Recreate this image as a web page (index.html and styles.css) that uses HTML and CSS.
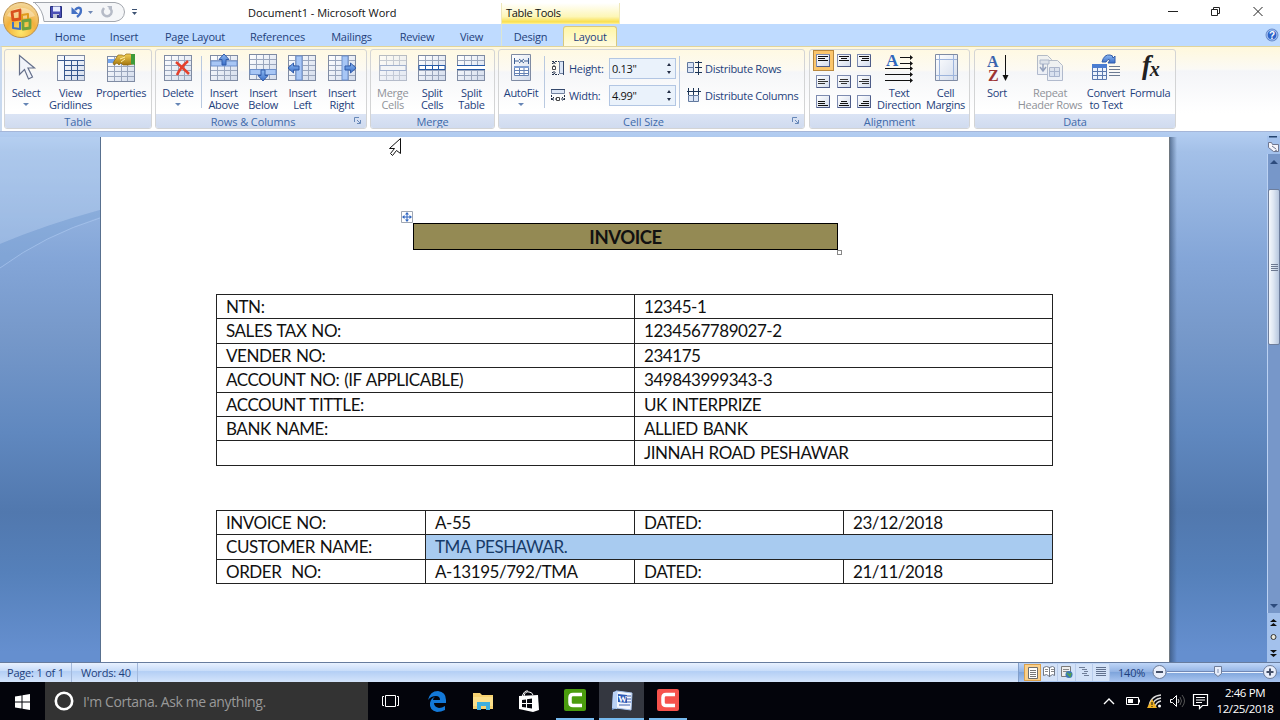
FILE: index.html
```html
<!DOCTYPE html>
<html>
<head>
    <meta charset="utf-8">
    <title>Document1 - Microsoft Word</title>
    <link rel="stylesheet" href="styles.css">
</head>
<body>
    <svg class="defs">
        <defs>
            <linearGradient id="cellfill" x1="0" y1="0" x2="1" y2="1"><stop offset="0" stop-color="#fff"/><stop offset="1" stop-color="#d3dcec"/></linearGradient>
            <linearGradient id="blue" x1="0" y1="0" x2="0" y2="1"><stop offset="0" stop-color="#8db9f2"/><stop offset="1" stop-color="#3b6fc8"/></linearGradient>
            <linearGradient id="hand" x1="0" y1="0" x2="0" y2="1"><stop offset="0" stop-color="#f3cf56"/><stop offset="1" stop-color="#a3750c"/></linearGradient>
            <radialGradient id="orb" cx=".5" cy=".85" r=".85"><stop offset="0" stop-color="#ffe66b"/><stop offset=".5" stop-color="#f2b13c"/><stop offset="1" stop-color="#f3d9a0"/></radialGradient>
            <symbol id="grid" viewBox="0 0 28 26">
                <rect x=".5" y=".5" width="27" height="25" fill="url(#cellfill)" stroke="#7f8ba3"/>
                <path d="M1 5.500h26M1 10.500h26M1 15.500h26M1 20.500h26M7.500 1v24M14.500 1v24M20.500 1v24" stroke="#9aa6bd" fill="none"/>
            </symbol>
            <symbol id="lines" viewBox="0 0 14 13">
                <rect x=".5" y=".5" width="13" height="12" fill="url(#cellfill)" stroke="#7d8bb0"/>
                <path d="M1 12.500h13M13.500 1v12" stroke="#4e5c88"/>
            </symbol>
            <symbol id="launch" viewBox="0 0 7 7"><path d="M.5 5V.5H5M3 3l3 3M6.500 3v3.500H3" fill="none" stroke="#6788b8"/></symbol>
        </defs>
    </svg>

    <div class="titlebar">
        <div class="quick">
            <svg width="140" height="24" viewBox="0 0 140 24">
                <path d="M33 2.500H115Q124 4 124.500 12Q124 20 115 21.500H44Q43 10 35 3" fill="#f5f6f8" stroke="#a3a7ae"/>
                <path d="M50.500 6.500h11v11h-11z" fill="#4a4fb5" stroke="#27307d"/><path d="M53 6.500h7v5h-7z" fill="#e8edff"/><path d="M53 14h6v4h-6z" fill="#c4c9d8"/><path d="M57 15h2v3h-2z" fill="#333a77"/>
                <path d="M71.500 7v7h7z" fill="#4470c4"/><path d="M75 10q3-3.500 5.500-1.500q2 4-3.500 8.500" fill="none" stroke="#4470c4" stroke-width="2.400"/>
                <path d="M88 11h5l-2.500 3z" fill="#7088b5"/>
                <path d="M104 8q-3 4 0 7q4 3 7-1q2-4-2-6" fill="none" stroke="#b6bbc7" stroke-width="2.500"/><path d="M107 6h5v5z" fill="#b6bbc7"/>
                <path d="M132 9.500h5" stroke="#3d5273"/><path d="M132 12h5l-2.500 3z" fill="#3d5273"/>
            </svg>
        </div>
        <div class="doc-title">Document1 - Microsoft Word</div>
        <div class="tools-title">Table Tools</div>
        <div class="window-buttons">
            <svg width="110" height="24" viewBox="0 0 110 24" fill="none" stroke="#222">
                <path d="M8 11.500h10"/>
                <path d="M51.500 9.500h6v6h-6zM53.500 9V7.500h6v6H58"/>
                <path d="M93.500 7l9 9M102.500 7l-9 9"/>
            </svg>
        </div>
    </div>

    <div class="tabs">
        <span class="tab home">Home</span>
        <span class="tab insert">Insert</span>
        <span class="tab page-layout">Page Layout</span>
        <span class="tab references">References</span>
        <span class="tab mailings">Mailings</span>
        <span class="tab review">Review</span>
        <span class="tab view">View</span>
        <span class="tab design">Design</span>
        <span class="tab active">Layout</span>
        <svg class="help" width="14" height="14" viewBox="0 0 14 14"><circle cx="7" cy="7" r="6" fill="#2c62c9" stroke="#6e8fc9"/><circle cx="7" cy="7" r="5" fill="none" stroke="#bcd4fa"/><text x="7" y="10.500" text-anchor="middle" class="q">?</text></svg>
    </div>
    <svg class="office-button" width="38" height="38" viewBox="0 0 38 38">
        <circle cx="19" cy="19" r="17.500" fill="url(#orb)" stroke="#b98f4d"/>
        <path d="M5 15a15 13 0 0 1 28 0q-14 5-28 0" fill="#fff" opacity=".35"/>
        <g fill="none" stroke-width="2.800" stroke-linejoin="round">
            <path d="M10 11l8-2v9l-7 1z" stroke="#d9501e"/>
            <path d="M20 14l6-1v6l-6 1z" stroke="#e09a1c" stroke-width="2"/>
            <path d="M11 21v6l7 1v-7" stroke="#4272c4" stroke-width="2"/>
            <path d="M21 20l7-1v8l-7 1z" stroke="#6fa23e"/>
        </g>
    </svg>

    <div class="ribbon">
        <div class="group g-table">
            <div class="group-body">
                <div class="btn w40"><svg viewBox="0 0 28 28"><path d="M7.500 1.500v19l5-5 4 9.500 4-2-4.500-9h6.500z" fill="#f1f4fa" stroke="#66718c" stroke-width="1.200"/></svg><span>Select</span><i class="arrow"></i></div>
                <div class="btn w48"><svg viewBox="0 0 28 28"><use href="#grid" y="1" width="28" height="26"/><path d="M1 2h26v4H1zM1 6h6v20H1z" fill="#f4f7fc"/><path d="M7.500 2v24M1 6.500h26M7 11.500h20M7 16.500h20M7 21.500h20M14.500 6v20M20.500 6v20" stroke="#38588f"/></svg><span>View<br>Gridlines</span></div>
                <div class="btn w54"><svg viewBox="0 0 28 28"><use href="#grid" y="2" width="28" height="26"/><path d="M1 5h9v4H1z" fill="#73a5ed"/><path d="M6 9l5-8h4l2 1 2-2h4l3 1v9l-5 1h-5l-2-2-2 2-2-2-3 2z" fill="url(#hand)" stroke="#8b650f" stroke-width=".7"/><path d="M24 0h4v11l-4-1z" fill="#3f9b39"/><path d="M13 5l5-2M14 8l4-3" stroke="#fff0a4"/></svg><span>Properties</span></div>
            </div>
            <div class="group-label">Table</div>
        </div>

        <div class="group g-rows">
            <div class="group-body">
                <div class="btn w44"><svg viewBox="0 0 28 28"><use href="#grid" y="1" width="28" height="26"/><path d="M12 8q7 6 13 12M24 7q-8 7-11 14" stroke="#e5402c" stroke-width="2.500" fill="none"/></svg><span>Delete</span><i class="arrow"></i></div>
                <div class="sep"></div>
                <div class="btn w39"><svg viewBox="0 0 28 28"><use href="#grid" y="1" width="28" height="26"/><path d="M1 7h26v5H1z" fill="#a7c6f5" stroke="#6e91cc"/><path d="M14 0l5 5.500h-3V11h-4V5.500H9z" fill="url(#blue)" stroke="#315cab"/></svg><span>Insert<br>Above</span></div>
                <div class="btn w39"><svg viewBox="0 0 28 28"><use href="#grid" width="28" height="26"/><path d="M1 15.500h26v5H1z" fill="#a7c6f5" stroke="#6e91cc"/><path d="M14 27l5-5.500h-3V16h-4v5.500H9z" fill="url(#blue)" stroke="#315cab"/></svg><span>Insert<br>Below</span></div>
                <div class="btn w39"><svg viewBox="0 0 28 28"><use href="#grid" y="1" width="28" height="26"/><path d="M8 2h6v24H8z" fill="#a7c6f5" stroke="#6e91cc"/><path d="M0 14l5.500-5v3H11v4H5.500v3z" fill="url(#blue)" stroke="#315cab"/></svg><span>Insert<br>Left</span></div>
                <div class="btn w39"><svg viewBox="0 0 28 28"><use href="#grid" y="1" width="28" height="26"/><path d="M14 2h6v24h-6z" fill="#a7c6f5" stroke="#6e91cc"/><path d="M28 14l-5.500-5v3H17v4h5.500v3z" fill="url(#blue)" stroke="#315cab"/></svg><span>Insert<br>Right</span></div>
            </div>
            <div class="group-label">Rows &amp; Columns<svg class="launch"><use href="#launch"/></svg></div>
        </div>

        <div class="group g-merge">
            <div class="group-body">
                <div class="btn w39 disabled"><svg viewBox="0 0 28 28"><use href="#grid" y="1" width="28" height="26"/><path d="M1 11.500h26v5H1z" fill="#edf2fb" stroke="#5877b3"/></svg><span>Merge<br>Cells</span></div>
                <div class="btn w39"><svg viewBox="0 0 28 28"><use href="#grid" y="1" width="28" height="26"/><path d="M1 11.500h26v4H1zM7.500 11v5M14.500 11v5M20.500 11v5" fill="#fff" stroke="#2459a8"/></svg><span>Split<br>Cells</span></div>
                <div class="btn w39"><svg viewBox="0 0 28 28"><use href="#grid" y="1" width="28" height="26"/><path d="M0 11.500h28v4H0z" fill="#fff"/><path d="M0 11.500h28M0 15.500h28" stroke="#2459a8"/></svg><span>Split<br>Table</span></div>
            </div>
            <div class="group-label">Merge</div>
        </div>

        <div class="group g-size">
            <div class="group-body">
                <div class="btn w44"><svg viewBox="0 0 28 28"><path d="M4.500.500h19v26h-19z" fill="url(#cellfill)" stroke="#7f8ba3"/><path d="M7.500 4v6M21.500 4v6M8 7h4M17 7h4M12 5l5 4M17 5l-5 4" stroke="#3c5f94" fill="none"/><path d="M7.500 12.500h14v9h-14zM8 16.500h14M8 19.500h14M12.500 13v9M17 13v9" fill="#fff" stroke="#6582b4"/><path d="M7 12h15v2H7z" fill="#7e9ed3"/></svg><span>AutoFit</span><i class="arrow"></i></div>
                <div class="sep"></div>
                <div class="fields">
                    <div class="field"><svg width="14" height="14"><path d="M8.500.500h4v12h-4z" fill="#dce6f6" stroke="#71819f"/><path d="M12.500 0v14" stroke="#34486b"/><path d="M3 1v12M1 3l2-2 2 2M1 11l2 2 2-2M1 .500h7M1 13.500h7" stroke="#23314b" stroke-dasharray="2 1" fill="none"/><path d="M1.500 5.500h3v3h-3z" fill="#fff" stroke="#444"/></svg><label>Height:</label><div class="spin">0.13"<span><i class="up"></i><i class="down"></i></span></div></div>
                    <div class="field"><svg width="14" height="14"><path d="M.500 1.500h13v4H.500z" fill="#dce6f6" stroke="#71819f"/><path d="M0 1.500h14" stroke="#34486b"/><path d="M1 11h12M3 9l-2 2 2 2M11 9l2 2-2 2M.500 7v6M13.500 7v6" stroke="#23314b" stroke-dasharray="2 1" fill="none"/><path d="M5.500 9.500h3v3h-3z" fill="#fff" stroke="#444"/></svg><label>Width:</label><div class="spin">4.99"<span><i class="up"></i><i class="down"></i></span></div></div>
                </div>
                <div class="sep"></div>
                <div class="distribute">
                    <div class="field"><svg width="15" height="14"><path d="M.500 1.500h6v5h-6zM.500 6.500h6v5h-6z" fill="#dce6f6" stroke="#61789e"/><path d="M11.500 0v14M8 1.500h7M8 6.500h7M8 11.500h7" stroke="#1c3556"/></svg>Distribute Rows</div>
                    <div class="field"><svg width="15" height="14"><path d="M1.500 7.500h5v6h-5zM6.500 7.500h5v6h-5z" fill="#dce6f6" stroke="#61789e"/><path d="M0 3.500h14M1.500 0v7M6.500 0v7M11.500 0v7" stroke="#1c3556"/></svg>Distribute Columns</div>
                </div>
            </div>
            <div class="group-label">Cell Size<svg class="launch"><use href="#launch"/></svg></div>
        </div>

        <div class="group g-align">
            <div class="group-body">
                <div class="align-grid">
                    <b class="on"><svg><use href="#lines"/><path d="M2 2.500h10M2 4.500h7M2 6.500h10" stroke="#111"/></svg></b>
                    <b><svg><use href="#lines"/><path d="M2 2.500h10M4 4.500h6M2 6.500h10" stroke="#111"/></svg></b>
                    <b><svg><use href="#lines"/><path d="M2 2.500h10M5 4.500h7M4 6.500h8" stroke="#111"/></svg></b>
                    <b><svg><use href="#lines"/><path d="M2 4.500h7M2 6.500h10M2 8.500h7" stroke="#333"/></svg></b>
                    <b><svg><use href="#lines"/><path d="M3 4.500h8M2 6.500h10M4 8.500h6" stroke="#333"/></svg></b>
                    <b><svg><use href="#lines"/><path d="M5 4.500h7M2 6.500h10M5 8.500h7" stroke="#333"/></svg></b>
                    <b><svg><use href="#lines"/><path d="M2 6.500h7M2 8.500h7M2 10.500h10" stroke="#111"/></svg></b>
                    <b><svg><use href="#lines"/><path d="M4 6.500h6M3 8.500h8M2 10.500h10" stroke="#111"/></svg></b>
                    <b><svg><use href="#lines"/><path d="M6 6.500h6M4 8.500h8M2 10.500h10" stroke="#111"/></svg></b>
                </div>
                <div class="btn w46"><svg viewBox="0 0 28 28"><text x="1" y="12" class="letter-a">A</text><path d="M15 3.500h11M15 9.500h11M0 14.500h26M0 20.500h26M0 26.500h26" stroke="#111"/><path d="M25 1l3 2.500-3 2.500zM25 7l3 2.500-3 2.500zM25 12l3 2.500-3 2.500zM25 18l3 2.500-3 2.500zM25 24l3 2.500-3 2.500z" fill="#111"/></svg><span>Text<br>Direction</span></div>
                <div class="btn w48"><svg viewBox="0 0 28 28"><path d="M3.500.500h22v26h-22z" fill="url(#cellfill)" stroke="#7f8ba3"/><path d="M7.500 1v25M21.500 1v25M4 5.500h21M4 21.500h21" stroke="#9db4dc"/></svg><span>Cell<br>Margins</span></div>
            </div>
            <div class="group-label">Alignment</div>
        </div>

        <div class="group g-data">
            <div class="group-body">
                <div class="btn w38"><svg viewBox="0 0 28 28"><text x="4" y="13" class="letter-s">A</text><text x="5" y="27" class="letter-z">Z</text><path d="M22.500 1v24" stroke="#111"/><path d="M19.500 21h6l-3 6z" fill="#111"/></svg><span>Sort</span></div>
                <div class="btn w66 disabled"><svg viewBox="0 0 28 28"><path d="M1.500 1.500h10l4 4v15h-14z" fill="#e5ebf5" stroke="#7889aa"/><path d="M11.500 6.500h10l5 5v15h-15z" fill="#e5ebf5" stroke="#7889aa"/><path d="M4 6h9v4H4zM13.500 13.500h10v9h-10zM14 17.500h10M18.500 14v9" fill="#c3d0e8" stroke="#6b80ad"/><path d="M7 10v6M4 13l3 4 3-4" stroke="#405a92" stroke-width="1.500" fill="none"/></svg><span>Repeat<br>Header Rows</span></div>
                <div class="btn w46"><svg viewBox="0 0 28 28"><path d="M.500 10.500h14v15H.500zM1 17.500h14M1 21.500h14M5.500 14v11M10.500 14v11" fill="#edf3fc" stroke="#5a78ad"/><path d="M0 10h15v4H0z" fill="#4b7dd1"/><path d="M17 12.500h11M17 15.500h11M17 18.500h11M17 21.500h11" stroke="#6c7b93"/><path d="M10 8q2-8 8-7 3 0 3 3l2-2v7h-7l2-3q-2-2-4 2z" fill="url(#blue)" stroke="#315cab"/></svg><span>Convert<br>to Text</span></div>
                <div class="btn w42"><svg viewBox="0 0 28 28"><text x="6" y="20" class="fx">f<tspan dx="-1" dy="2" class="small-x">x</tspan></text></svg><span>Formula</span></div>
            </div>
            <div class="group-label">Data</div>
        </div>
    </div>

    <div class="workspace">
        <div class="margin-left"><svg width="100" height="526" viewBox="0 0 100 526"><path d="M0 0H100V73Q45 88 0 107z" fill="#c5dbf5" opacity=".3"/><path d="M0 107Q45 88 100 73V80Q45 98 0 131z" fill="#7ba2d3" opacity=".35"/><path d="M0 131Q45 98 100 81" stroke="#a9c6ee" fill="none" opacity=".7"/></svg></div>
        <div class="page">
            <div class="invoice-title">INVOICE
                <svg class="move" width="12" height="12"><path d="M.500.500h11v11H.500z" fill="#fff" stroke="#9fa7b3"/><path d="M6 2v8M2 6h8" stroke="#2e65c0"/><path d="M6 1l2 2.500H4zM6 11l2-2.500H4zM1 6l2.500-2v4zM11 6l-2.500-2v4z" fill="#2e65c0"/></svg>
                <i class="resize"></i>
            </div>
            <div class="sheet two">
                <div>NTN:</div><div>12345-1</div>
                <div>SALES TAX NO:</div><div>1234567789027-2</div>
                <div>VENDER NO:</div><div>234175</div>
                <div>ACCOUNT NO: (IF APPLICABLE)</div><div>349843999343-3</div>
                <div>ACCOUNT TITTLE:</div><div>UK INTERPRIZE</div>
                <div>BANK NAME:</div><div>ALLIED BANK</div>
                <div></div><div>JINNAH ROAD PESHAWAR</div>
            </div>
            <div class="sheet four">
                <div>INVOICE NO:</div><div>A-55</div><div>DATED:</div><div>23/12/2018</div>
                <div>CUSTOMER NAME:</div><div class="selected">TMA PESHAWAR.</div>
                <div>ORDER&nbsp; NO:</div><div>A-13195/792/TMA</div><div>DATED:</div><div>21/11/2018</div>
            </div>
        </div>
        <div class="margin-right"></div>
        <div class="scrollbar">
            <svg width="13" height="18"><path d="M2 .500h8" stroke="#24446f" stroke-width="2"/><path d="M1.500 6.500h3l1 2h6v7h-5l-5-4z" fill="#f4f4fa" stroke="#6f7790"/><path d="M5 10l4 3M8 15l2-1" stroke="#6f7790"/></svg>
            <div class="track">
                <svg width="12" height="35"><path d="M2 10h8L6 6z" fill="#2c4b7d"/></svg>
                <div class="thumb"><i></i><i></i><i></i><i></i></div>
                <svg class="track-end" width="12" height="12"><path d="M2 3h8L6 7z" fill="#2c4b7d"/></svg>
            </div>
            <svg width="13" height="49"><path d="M3 9h7L6.500 6zM3 13h7l-3.500-3zM3 13.500h7" fill="#111"/><circle cx="6.500" cy="24" r="2.500" fill="#e8e8dc" stroke="#333"/><path d="M3 37h7l-3.500 3zM3 41h7l-3.500 3z" fill="#111"/></svg>
        </div>
    </div>
    <svg class="pointer" width="14" height="22"><path d="M11.500 1.500L.500 11.500h5l-4 5 2 2 4-5 4 3z" fill="#fff" stroke="#111"/></svg>

    <div class="statusbar">
        <span class="pages">Page: 1 of 1</span>
        <span class="words">Words: 40</span>
        <div class="status-right">
            <div class="views">
                <b class="on"><svg width="17" height="16"><path d="M3.500 2.500h9v11h-9z" fill="#fff" stroke="#6d6d6d"/><path d="M5 5.500h6M5 7.500h6M5 9.500h6M5 11.500h6" stroke="#777"/></svg></b>
                <b><svg width="17" height="16"><path d="M2.500 3.500l3-1 3 1 3-1 2 1v8l-2-1-3 2-3-2-3 1zM8.500 3v10" fill="#fff" stroke="#707784"/><path d="M4 5.500h3M4 7.500h3M10 5.500h3M10 7.500h3" stroke="#888"/></svg></b>
                <b><svg width="17" height="16"><path d="M3.500 2.500h9v10h-9z" fill="#eee" stroke="#7a7a7a"/><path d="M5 5.500h6M5 7.500h6" stroke="#888"/><circle cx="11" cy="10.500" r="3.500" fill="#3c79b7"/><path d="M9 9l3 3 1-3" stroke="#55a44a" fill="none" stroke-width="1.500"/></svg></b>
                <b><svg width="17" height="16"><path d="M3 3.500h6M6 5.500h5M8 7.500h4M6 9.500h5M8 11.500h5" stroke="#6f7e98"/></svg></b>
                <b><svg width="17" height="16"><path d="M3 3.500h10M3 5.500h10M3 7.500h10M3 9.500h10M3 11.500h10" stroke="#60708d"/></svg></b>
            </div>
            <span class="zoom">140%</span>
            <svg class="slider" width="128" height="20"><path d="M16 8.500h96" stroke="#7087b5"/><path d="M16 9.500h96" stroke="#eaf2ff"/><g fill="#e8eefb" stroke="#6e7c98"><circle cx="8.500" cy="9" r="6.500"/><circle cx="119" cy="9" r="6.500"/><path d="M63.500 3.500h7v7l-3.500 3-3.500-3z"/></g><path d="M5 9h7M115.500 9h7M119 5.500v7" stroke="#445069" stroke-width="2"/><path d="M67 6v4" stroke="#8190b0"/></svg>
        </div>
    </div>

    <div class="taskbar">
        <div class="start"><svg width="16" height="16"><path d="M0 2.500l6.500-1v6H0zM7.500 1.300L15 0v7.500H7.500zM0 8.500h6.500v6l-6.500-1zM7.500 8.500H15V16l-7.500-1.300z" fill="#fff"/></svg></div>
        <div class="cortana"><svg width="20" height="20"><circle cx="10" cy="10" r="8.200" fill="none" stroke="#fff" stroke-width="2.600"/></svg><span>I'm Cortana. Ask me anything.</span></div>
        <div class="task"><svg width="20" height="14"><path d="M4.500 1.500h10v11h-10zM3 2.500H1.500v9H3M16 2.500h1.500v9H16" fill="none" stroke="#fff"/></svg></div>
        <div class="task edge"><svg width="20" height="21" viewBox="0 0 20 21"><path d="M1 9Q3 0 11 0Q19 1 19 9v3H7q0 4 5 5 3 0 6-2v4q-4 2-8 2-8-2-7-9 1-5 5-6-2 1-2 3h7q0-4-4-4-5 0-8 4z" fill="#1379d8"/></svg></div>
        <div class="task"><svg width="21" height="18"><path d="M0 1h7l2 2h11v14H0z" fill="#f6d271"/><path d="M0 5h20v9H0z" fill="#fbe08b"/><path d="M4 10h13v8h-4v-4H8v4H4z" fill="#3bafdf"/></svg></div>
        <div class="task"><svg width="20" height="22"><path d="M5 6q1-5 5-4 3 0 4 3M3 7q2-7 6-6" fill="none" stroke="#fff"/><path d="M0 6l19-1 1 15-6 2L0 19z" fill="#fff"/><path d="M3 10l4-.500V13H3zM8 9.300l5-.800V13H8zM3 14h4v3.500L3 17zM8 14h5v4.500l-5-.800z" fill="#05070d"/></svg></div>
        <div class="task running"><svg width="23" height="22"><rect width="22" height="22" rx="2" fill="#4a9c0e"/><path d="M18 5.500H9q-3 0-3 3v5q0 3 3 3h9" fill="none" stroke="#fff" stroke-width="3.500"/></svg></div>
        <div class="task running current"><svg width="22" height="21"><path d="M2 3l4-3v18l-5 2z" fill="#7aa4df"/><path d="M6 1l15 2-1 17-15-2z" fill="#f2f6fd" stroke="#a7c2eb"/><path d="M2 2l4-1v18l-5-1z" fill="#b9d1f5"/><path d="M14 6h6M16 9h4M15 12h5M8 15h11" stroke="#3b5fae"/><path d="M7 4l9 1v8l-9-1z" fill="#2d58b3"/><text x="7" y="12" class="w">W</text></svg></div>
        <div class="task running"><svg width="23" height="22"><rect width="22" height="22" rx="2" fill="#f6524c"/><path d="M18 5.500H9q-3 0-3 3v5q0 3 3 3h9" fill="none" stroke="#fff" stroke-width="3.500"/></svg></div>
        <div class="tray">
            <svg width="112" height="24" viewBox="0 0 112 24">
                <path d="M6 15l5-5 5 5" fill="none" stroke="#fff" stroke-width="1.400"/>
                <path d="M28.500 8.500h12v7h-12zM41.500 10.500v3" fill="none" stroke="#fff"/><path d="M30 10h5v4h-5z" fill="#fff"/>
                <path d="M51 18q1-11 12-12M54 18q1-8 9-9M57 18q1-5 6-6" fill="none" stroke="#ddd" stroke-width="1.300"/><circle cx="61.500" cy="17" r="1.500" fill="#fff"/><path d="M49 19l5-9 5 9z" fill="#f0b225"/><path d="M54 13v3M54 17v1" stroke="#111"/>
                <path d="M72.500 10.500h2l4-4v11l-4-4h-2z" fill="none" stroke="#fff"/><path d="M80 10q2 2 0 4" stroke="#ccc" fill="none"/><path d="M82 8q3 4 0 8M84 6q5 6 0 12" stroke="#555" fill="none"/>
                <path d="M95.500 5.500h14v11h-5l-3 3v-3h-6zM98 8.500h9M98 11h9M98 13.500h6" fill="none" stroke="#fff" stroke-width="1.200"/>
            </svg>
            <div class="clock">2:46 PM<br>12/25/2018</div>
        </div>
    </div>
</body>
</html>
```
FILE: styles.css
```css
* { box-sizing: border-box; }
body { margin: 0; width: 1280px; height: 720px; overflow: hidden; position: relative; background: #fff; font-family: "Open Sans", "Noto Sans", sans-serif; font-size: 11px; letter-spacing: -.1px; color: #1e3f7c; white-space: nowrap; }
svg { flex: none; }
.defs { position: absolute; width: 0; height: 0; }

.titlebar { display: flex; height: 24px; background: #fff; color: #111; line-height: 26px; letter-spacing: 0; }
.quick { width: 248px; }
.doc-title { width: 253px; }
.tools-title { width: 119px; padding-left: 4px; border-left: 1px solid #eee7b9; border-right: 1px solid #eee7b9; margin-top: 3px; line-height: 20px; letter-spacing: -.3px; background: linear-gradient(#fff, #fdf6b6 65%, #f9df4d 90%, #fff3a1); }
.window-buttons { margin-left: auto; width: 120px; }

.tabs { display: flex; height: 22px; background: #bfdbff; line-height: 25px; padding-left: 42px; letter-spacing: -.2px; }
.tab { text-align: center; height: 22px; }
.home { width: 56px; }
.insert { width: 52px; }
.page-layout { width: 90px; }
.references { width: 75px; }
.mailings { width: 73px; }
.review { width: 58px; }
.view { width: 51px; }
.design { width: 58px; margin-left: 4px; border-left: 1px solid #dce6d2; }
.active { width: 54px; margin: 2px 0 0 4px; height: 20px; line-height: 20px; border: 1px solid #d9ca7d; border-bottom: 0; border-radius: 3px 3px 0 0; background: linear-gradient(#fff6a5, #fffbe0); }
.help { margin: 4px 1px 0 auto; }
.q { font: bold 10px "Liberation Sans", sans-serif; fill: #fff; }
.office-button { position: absolute; left: 2px; top: 1px; }

.ribbon { display: flex; height: 85px; padding: 2px 0 3px 2px; border-top: 1px solid #e0d49c; border-left: 2px solid #c8d9ef; background: linear-gradient(#fff8dc, #fbfaf5 22px, #f4f5f8 24px, #fff 66px); letter-spacing: -.3px; }
.group { height: 80px; border: 1px solid #d3d4d5; border-radius: 3px; background: linear-gradient(#fff9e3, #fcfaf3 20px, #f5f6f8 22px, #fff 60px); display: flex; flex-direction: column; overflow: hidden; margin-right: 3px; flex: none; }
.g-table { width: 148px; }
.g-rows { width: 212px; }
.g-merge { width: 125px; }
.g-size { width: 307px; margin-right: 4px; }
.g-align { width: 161px; margin-right: 4px; }
.g-data { width: 202px; }
.group-body { display: flex; height: 64px; }
.group-label { position: relative; height: 14px; line-height: 15px; text-align: center; background: linear-gradient(#dbe4f5, #d0dbef); color: #3e6aaa; letter-spacing: -.1px; }
.g-rows .group-label, .g-size .group-label { padding-right: 16px; }
.launch { position: absolute; right: 5px; top: 3px; width: 7px; height: 7px; }
.btn { display: flex; flex-direction: column; align-items: center; text-align: center; line-height: 12px; padding-top: 4px; flex: none; }
.btn > svg { width: 28px; height: 28px; margin-bottom: 5px; overflow: visible; }
.disabled { color: #8f9299; }
.disabled svg { opacity: .55; }
.w38 { width: 38px; }
.w39 { width: 39.4px; }
.w40 { width: 42px; }
.w42 { width: 42px; }
.w44 { width: 44px; }
.w46 { width: 46px; }
.w48 { width: 47px; }
.w54 { width: 54px; }
.w66 { width: 66px; }
.arrow { border: 3px solid transparent; border-top-color: #6685b5; border-bottom: 0; margin-top: 4px; }
.sep { width: 1px; height: 52px; margin: 6px 1px 0; background: #b9c9e0; }
.g-rows .sep { margin-right: 2px; }
.g-merge .group-body { padding-left: 2px; }
.g-data .w38 { margin-left: 3px; }
.g-data .w66 { margin-left: 1px; }

.fields { width: 132px; padding: 6px 0 0 5px; }
.distribute { padding: 6px 0 0 6px; }
.field { display: flex; align-items: center; height: 24px; margin-bottom: 3px; }
.field svg { margin-right: 4px; }
.field label { width: 40px; }
.distribute .field svg { margin-right: 3px; }
.spin { width: 67px; height: 21px; border: 1px solid #b2c6e3; background: #eaf2fb; color: #111; line-height: 19px; padding: 0 4px 0 2px; display: flex; justify-content: space-between; align-items: center; }
.spin span { display: flex; flex-direction: column; gap: 5px; }
.up { border: 2.5px solid transparent; border-bottom: 3px solid #222d44; border-top: 0; }
.down { border: 2.5px solid transparent; border-top: 3px solid #222d44; border-bottom: 0; }

.align-grid { display: grid; grid-template-columns: repeat(3, 20.5px); grid-auto-rows: 20.7px; width: 62px; margin: 0 1px 0 3px; }
.align-grid b { display: flex; align-items: center; justify-content: center; }
.align-grid svg { width: 14px; height: 13px; }
.align-grid .on { border: 1px solid #b9883d; background: #fbc66b; }
.letter-a { font: bold 17px "Liberation Serif", serif; fill: #2f66bb; }
.letter-s { font: bold 16px "Liberation Serif", serif; fill: #3a64ad; }
.letter-z { font: bold 16px "Liberation Serif", serif; fill: #9d3434; }
.fx { font: italic bold 27px "Liberation Serif", serif; fill: #222; }
.small-x { font-size: 20px; }

.workspace { height: 531px; display: flex; padding-top: 5px; background: linear-gradient(#b3cdf1, #a3c0e8 20px, #83a5d7 130px, #7799ca 200px, #6088bf 300px, #5178ae 380px, #5580ba 440px, #658fcf 520px); border-top: 1px solid #a5b6d8; }
.margin-left { width: 101px; height: 525px; overflow: hidden; border-right: 1px solid #58708f; }
.page { width: 1069px; background: #fff; border-right: 1px solid #6e7780; font: 17px "Lato", "Open Sans", sans-serif; letter-spacing: -.45px; word-spacing: 1px; color: #111; padding-left: 115px; }
.margin-right { width: 97px; background: linear-gradient(90deg, rgba(50, 75, 110, .65), transparent 7px); }
.scrollbar { width: 13px; margin-top: -1px; display: flex; flex-direction: column; background: #a3c1ec; }
.track { flex: 1; display: flex; flex-direction: column; background: #7797c9; border-left: 1px solid #bcd2f3; }
.track-end { margin-top: auto; }
.thumb { height: 156px; border: 1px solid #6e7e9c; border-radius: 2px; background: linear-gradient(90deg, #f5f8fc, #dde6f2 45%, #b6c6de); display: flex; flex-direction: column; justify-content: center; align-items: center; gap: 1px; }
.thumb i { width: 7px; height: 1px; background: #6c7890; }

.invoice-title { position: relative; margin: 86px 0 0 197px; width: 425px; height: 27px; border: 1px solid #000; background: #948a54; text-align: center; font-weight: bold; font-size: 18.5px; line-height: 27px; }
.move { position: absolute; left: -13px; top: -13px; }
.resize { position: absolute; right: -5px; bottom: -6px; width: 5px; height: 5px; border: 1px solid #888; background: #fff; }
.sheet { display: grid; grid-auto-rows: 24.4px; width: 837px; border-right: 1px solid #222; border-bottom: 1px solid #222; }
.sheet div { border-left: 1px solid #222; border-top: 1px solid #222; padding-left: 9px; line-height: 24px; }
.two { grid-template-columns: 418px 418px; margin-top: 44px; }
.four { grid-template-columns: 209px 209px 209px 209px; margin-top: 44px; }
.sheet .selected { grid-column: span 3; background: #a8cbf0; color: #173b68; }
.pointer { position: absolute; left: 389px; top: 137px; }

.statusbar { height: 20px; display: flex; line-height: 19px; border-top: 1px solid #677c9e; background: linear-gradient(#e8f1ff, #c9ddf9 40%, #b4cff5 45%, #d4e4fb); letter-spacing: -.2px; }
.pages { width: 72px; padding-left: 7px; border-right: 1px solid #a3b9dc; }
.words { width: 66px; padding-left: 9px; border-right: 1px solid #a3b9dc; }
.status-right { margin-left: auto; width: 262px; display: flex; padding-left: 5px; border-left: 1px solid #829fca; background: linear-gradient(#bfd6f8, #94b4e4 45%, #7fa5dc 50%, #aac6f0); }
.views { display: flex; width: 86px; height: 17px; margin-top: 1px; background: #d3e2f8; }
.views b { width: 17.2px; border-right: 1px solid #b9cceb; }
.views .on { background: #fbd18c; border: 1px solid #dba04a; }
.zoom { margin-left: 8px; width: 33px; }

.taskbar { height: 38px; background: #03040b; display: flex; align-items: center; }
.start { width: 45px; padding: 4px 0 0 15px; }
.cortana { display: flex; align-items: center; width: 323px; height: 38px; padding-left: 9px; background: #333; color: #999; font-size: 14px; letter-spacing: -.4px; }
.cortana span { margin-left: 9px; }
.task { width: 46.1px; height: 38px; display: flex; align-items: center; justify-content: center; }
.running { border-bottom: 2px solid #76b9ed; height: 38px; width: 38px; margin: 0 4px; }
.current { width: 45px; margin: 0 1px; background: #343740; }
.w { font: bold 9px "Liberation Serif", serif; fill: #fff; }
.tray { margin-left: auto; display: flex; align-items: center; color: #fff; }
.clock { width: 70px; text-align: center; font-size: 11.5px; line-height: 16px; letter-spacing: -.4px; }
```
